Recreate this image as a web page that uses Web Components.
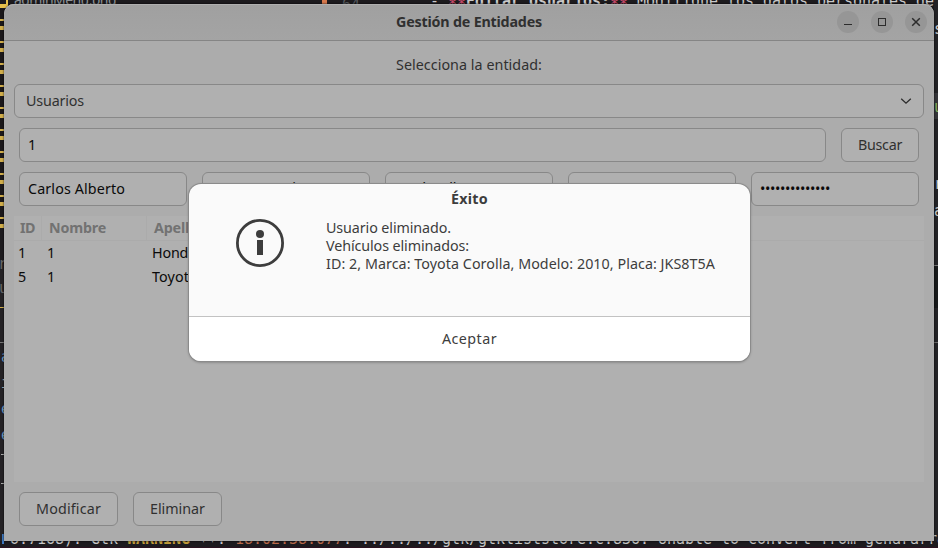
<!DOCTYPE html>
<html lang="es"><head><meta charset="utf-8"><title>Gestión de Entidades</title>
<style>
html,body{margin:0;width:938px;height:548px;overflow:hidden;background:#1d1b1e}
body{font:14.3px/18px "Noto Sans","Open Sans",sans-serif;color:#303030}
</style></head><body>
<desktop-scene></desktop-scene>
<script>
const define=(name,html,setup)=>customElements.define(name,class extends HTMLElement{
  connectedCallback(){
    if(!this.shadowRoot){this.attachShadow({mode:'open'}).innerHTML=html;}
    if(setup)setup.call(this,this.shadowRoot);
  }
});

// Text label: "w" is the advance width, spread over the letters.
define('ui-label',`<style>:host{display:inline-block;white-space:pre}span{display:inline-block}</style><span><slot></slot></span>`,function(r){
  const w=+this.getAttribute('w');if(!w)return;
  const s=r.querySelector('span');
  s.style.letterSpacing=(w-s.getBoundingClientRect().width)/this.textContent.length+'px';
  this.style.width=w+'px';
});

define('ui-entry',`<style>:host{display:flex;align-items:center;box-sizing:border-box;height:34px;padding:0 8px;border:1px solid #888;border-radius:6px;background:#b0b0b0;color:#0a0a0a;flex:1 1 0;min-width:0;overflow:hidden}:host(.raised){padding-bottom:2px}</style><slot></slot>`);

define('ui-button',`<style>:host{display:flex;align-items:center;justify-content:center;box-sizing:border-box;height:34px;border:1px solid #888;border-radius:6px;background:#b0b0b0;color:#303030;flex:none}</style><slot></slot>`);

define('ui-combo',`<style>:host{display:flex;align-items:center;justify-content:space-between;box-sizing:border-box;height:34px;padding:0 11px;border:1px solid #888;border-radius:6px;background:#b0b0b0}svg{display:block}</style><slot></slot><svg width="12" height="8" viewBox="0 0 12 8"><path d="M1.2 1.7 6 6.2l4.8-4.5" fill="none" stroke="#2c2c2c" stroke-width="1.3"/></svg>`);

define('window-control',`<style>:host{display:grid;place-items:center;width:22px;height:22px;border-radius:50%;background:#969696}svg{display:block}</style><svg width="22" height="22" fill="none" stroke="#2c2c2c"></svg>`,function(r){
  const shapes={min:'<path d="M7 13.5h8"/>',max:'<rect x="7.5" y="7.5" width="7" height="7"/>',close:'<path d="M7.2 7.2l7.6 7.6M14.8 7.2l-7.6 7.6" stroke-width="1.5"/>'};
  r.querySelector('svg').innerHTML=shapes[this.getAttribute('kind')];
});

define('title-bar',`<style>
:host{display:grid;grid-template-columns:1fr auto 1fr;align-items:center;box-sizing:border-box;height:37px;padding:0 7px;border-bottom:1px solid #858585;background:linear-gradient(#a0a0a0,#a4a4a4);box-shadow:inset 0 1px #b0b0b0;font-weight:700;border-radius:10px 10px 0 0}
div{display:flex;gap:12px;justify-content:flex-end}
</style><span></span><slot></slot><div><window-control kind="min"></window-control><window-control kind="max"></window-control><window-control kind="close"></window-control></div>`);

define('entity-table',`<style>
:host{display:block;height:266px;background:#b0b0b0;color:#0a0a0a}
.row{display:grid;grid-template-columns:28px 105px 1fr;height:24px;align-items:center}
.row>*{padding-left:5px}
.row>:first-child{padding-left:4px}
.head{font-weight:700;color:#727272;border-bottom:1px solid #ababab}
.head>*{box-sizing:border-box;height:24px;line-height:24px;padding-left:6px!important;border-right:1px solid #ababab}
.head>:nth-child(2),.head>:nth-child(3){padding-left:7px!important}
.head>:last-child{border:0}
</style>
<div class="row head"><span><ui-label w="15">ID</ui-label></span><span><ui-label w="57">Nombre</ui-label></span><span><ui-label w="57">Apellido</ui-label></span></div>
<div class="row"><span>1</span><span>1</span><span><ui-label w="44">Honda</ui-label></span></div>
<div class="row"><span>5</span><span>1</span><span><ui-label w="45">Toyota</ui-label></span></div>`);

define('entity-window',`<style>
:host{display:flex;flex-direction:column;box-sizing:border-box;width:930px;height:537px;background:#acacac;border-radius:10px 10px 0 0;box-shadow:0 0 2px #000}
main{display:flex;flex-direction:column;gap:10px;padding:15px 10px 0}
.center{display:flex;justify-content:center;height:18px}
.row{display:flex;gap:15px;padding:0 5px}
.search{width:78px}.mod{width:99px}.del{width:89px}
</style>
<title-bar><ui-label w="146">Gestión de Entidades</ui-label></title-bar>
<main>
<div class="center"><ui-label w="146">Selecciona la entidad:</ui-label></div>
<ui-combo><ui-label w="58">Usuarios</ui-label></ui-combo>
<div class="row"><ui-entry>1</ui-entry><ui-button class="search"><ui-label w="44">Buscar</ui-label></ui-button></div>
<div class="row"><ui-entry><ui-label w="97">Carlos Alberto</ui-label></ui-entry><ui-entry class="raised"><ui-label w="103">Ramos Costino</ui-label></ui-entry><ui-entry class="raised"><ui-label w="92">sandovallente</ui-label></ui-entry><ui-entry></ui-entry><ui-entry><ui-label w="70">••••••••••••••</ui-label></ui-entry></div>
<entity-table></entity-table>
<div class="row"><ui-button class="mod"><ui-label w="65">Modificar</ui-label></ui-button><ui-button class="del"><ui-label w="55">Eliminar</ui-label></ui-button></div>
</main>`);

define('message-dialog',`<style>
:host{display:flex;flex-direction:column;width:561px;height:177px;border-radius:12px;overflow:hidden;background:#fafafa;color:#3d3d3d;box-shadow:0 0 0 1px #8b8b8b,0 1px 3px rgba(0,0,0,.4)}
h1{margin:0;padding-top:6px;height:18px;font-size:14.3px;line-height:18px;text-align:center}
.body{display:flex;height:108px;padding-left:47px;gap:42px}
svg{display:block;margin-top:11px}
.copy{display:flex;flex-direction:column;padding-top:11px}
footer{display:flex;flex:1;align-items:center;justify-content:center;border-top:1px solid #c2c2c2;background:#fff}
</style>
<h1><ui-label w="37">Éxito</ui-label></h1>
<div class="body"><svg width="48" height="48"><circle cx="24" cy="24" r="22.6" fill="none" stroke="#3d3d3d" stroke-width="2.8"/><circle cx="24" cy="15" r="4" fill="#3d3d3d"/><path d="M21 21h6v15h-6z" fill="#3d3d3d"/></svg>
<div class="copy"><ui-label w="125">Usuario eliminado.</ui-label><ui-label w="143">Vehículos eliminados:</ui-label><ui-label w="389">ID: 2, Marca: Toyota Corolla, Modelo: 2010, Placa: JKS8T5A</ui-label></div></div>
<footer><ui-label w="55">Aceptar</ui-label></footer>`);

// Editor and terminal that show around the edges of the window.
define('editor-backdrop',`<style>
:host{display:block;position:relative;width:938px;height:548px;overflow:hidden;background:#1d1b1e;font:15px/18px "DejaVu Sans Mono","Liberation Mono",monospace;color:#c9c9c9}
:host>*{position:absolute;white-space:pre}
.stripes{left:0;top:8px;width:5px;height:220px;background:repeating-linear-gradient(#1b181a 0 11px,#d1ae4c 11px 13px,#1b181a 13px 18px,#d1ae4c 18px 22px)}
.corner{left:0;top:0;width:6px;height:4px;border-right:2px solid #e6bf4c;border-bottom:4px solid #e6bf4c}
.right{left:934px;width:4px;top:0;height:548px;background:#222225}
i{font-style:normal}.p{color:#c94a6b}.y{color:#c29c3a}.o{color:#b8694a}.b{color:#6f9cc4}.g{color:#83ad5c}.d{color:#666}
</style>
<div class="right"></div>
<div class="stripes"></div><div class="corner"></div>
<div style="left:14px;top:-9px;font:14px/18px 'Noto Sans',sans-serif;color:#8e9498"><ui-label w="102">adminMenu.png</ui-label></div>
<div style="left:322px;top:0;width:5px;height:4px;background:#d6784c"></div>
<div style="left:342px;top:-4px;color:#55585c"><ui-label w="18">64</ui-label></div>
<div style="left:430px;top:-8px"><ui-label w="18">- </ui-label></div>
<div class="p" style="left:448px;top:-4px"><ui-label w="18">**</ui-label></div>
<div style="left:466px;top:-8px;font-weight:700"><ui-label w="144">Editar Usuarios:</ui-label></div>
<div class="p" style="left:610px;top:-4px"><ui-label w="18">**</ui-label></div>
<div style="left:637px;top:-8px"><ui-label w="297">Modifique los datos personales de</ui-label></div>
<div style="left:934px;top:20px">s</div>
<div style="left:934px;top:93px;width:4px;height:26px;background:#343438"></div>
<div class="g" style="left:934px;top:98px">u</div>
<div style="left:934px;top:175px">r</div><div style="left:934px;top:202px">a</div>
<div style="left:934px;top:265px;width:4px;height:42px;border-top:1px solid #777;background:#17191a"></div>
<div style="left:934px;top:342px;width:4px;height:1px;background:#666"></div>
<div style="left:0;top:264px;width:5px;height:284px;background:#242225"></div>
<div class="d" style="left:-2px;top:255px">r</div><div class="d" style="left:-1px;top:279px">u</div>
<div style="left:0;top:307px;width:5px;height:1px;background:#d1ae4c"></div>
<div style="left:0;top:342px;width:5px;height:1px;background:#777"></div>
<div class="b" style="left:1px;top:348px">a</div><div style="left:1px;top:374px">i</div>
<div class="b" style="left:1px;top:400px">e</div><div class="b" style="left:1px;top:426px">e</div>
<div style="left:1px;top:454px;width:3px;height:1px;background:#aaa"></div><div style="left:1px;top:483px;width:3px;height:1px;background:#aaa"></div>
<div style="left:0;top:541px;width:938px;height:6px;background:#1d1b1f;border-bottom:1px solid #2b1220"></div>
<div style="left:1px;top:530px"><ui-label w="90"> o.7168): </ui-label></div>
<div style="left:91px;top:530px"><ui-label w="36">Gtk-</ui-label></div>
<div class="y" style="left:127px;top:530px;font-weight:700"><ui-label w="63">WARNING</ui-label></div>
<div style="left:199px;top:533px"><ui-label w="18">**</ui-label></div><div style="left:217px;top:530px">:</div>
<div class="o" style="left:235px;top:530px"><ui-label w="108">18:02:38.077</ui-label></div>
<div style="left:343px;top:530px"><ui-label w="612">: ../../../gtk/gtkliststore.c:836: Unable to convert from gchararray</ui-label></div>
<div style="left:2px;top:534px;width:2px;height:10px;background:#3f7ac2"></div>`);

define('desktop-scene',`<style>
:host{display:block;position:relative;width:938px;height:548px;overflow:hidden}
entity-window{position:absolute;left:4px;top:4px}
message-dialog{position:absolute;left:189px;top:184px}
</style><editor-backdrop></editor-backdrop><entity-window></entity-window><message-dialog></message-dialog>`);
</script></body></html>
